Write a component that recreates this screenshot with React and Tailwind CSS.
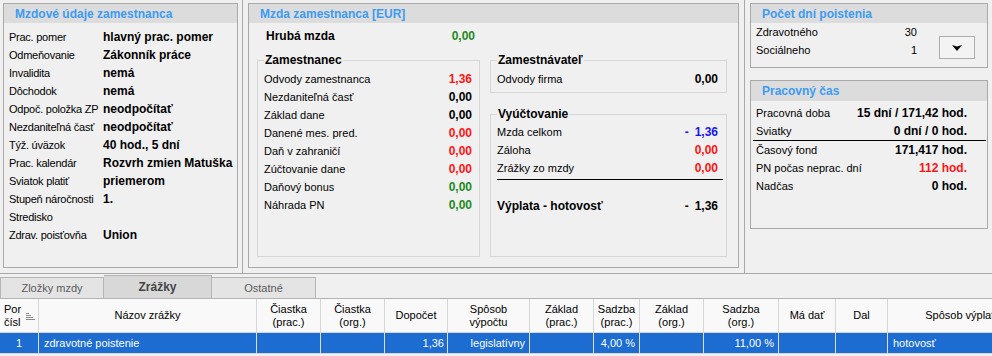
import { useState } from "react";

const RED = "text-[#ff1414]";
const GREEN = "text-[#1e8a1e]";
const BLACK = "text-black";

const employeeInfo = [
  ["Prac. pomer", "hlavný prac. pomer"],
  ["Odmeňovanie", "Zákonník práce"],
  ["Invalidita", "nemá"],
  ["Dôchodok", "nemá"],
  ["Odpoč. položka ZP", "neodpočítať"],
  ["Nezdaniteľná časť", "neodpočítať"],
  ["Týž. úväzok", "40 hod., 5 dní"],
  ["Prac. kalendár", "Rozvrh zmien Matuška"],
  ["Sviatok platiť", "priemerom"],
  ["Stupeň náročnosti", "1."],
  ["Stredisko", ""],
  ["Zdrav. poisťovňa", "Union"],
];

const employeeRows = [
  ["Odvody zamestnanca", "1,36", RED],
  ["Nezdaniteľná časť", "0,00", BLACK],
  ["Základ dane", "0,00", BLACK],
  ["Danené mes. pred.", "0,00", RED],
  ["Daň v zahraničí", "0,00", RED],
  ["Zúčtovanie dane", "0,00", RED],
  ["Daňový bonus", "0,00", GREEN],
  ["Náhrada PN", "0,00", GREEN],
];

const columns = [
  { w: "w-[39px]", label: ["Por", "čísl"], sort: true },
  { w: "w-[218px]", label: ["Názov zrážky"] },
  { w: "w-[64px]", label: ["Čiastka", "(prac.)"] },
  { w: "w-[64px]", label: ["Čiastka", "(org.)"] },
  { w: "w-[63px]", label: ["Dopočet"] },
  { w: "w-[82px]", label: ["Spôsob", "výpočtu"] },
  { w: "w-[64px]", label: ["Základ", "(prac.)"] },
  { w: "w-[46px]", label: ["Sadzba", "(prac.)"] },
  { w: "w-[64px]", label: ["Základ", "(org.)"] },
  { w: "w-[75px]", label: ["Sadzba", "(org.)"] },
  { w: "w-[57px]", label: ["Má dať"] },
  { w: "w-[52px]", label: ["Dal"] },
  { w: "w-[150px]", label: ["Spôsob výplaty"] },
];

const row = [
  { v: "1", a: "justify-center" },
  { v: "zdravotné poistenie", a: "justify-start pl-[5px]" },
  { v: "", a: "" },
  { v: "", a: "" },
  { v: "1,36", a: "justify-end pr-[3px]" },
  { v: "legislatívny", a: "justify-end pr-[4px]" },
  { v: "", a: "" },
  { v: "4,00 %", a: "justify-end pr-[4px]" },
  { v: "", a: "" },
  { v: "11,00 %", a: "justify-end pr-[4px]" },
  { v: "", a: "" },
  { v: "", a: "" },
  { v: "hotovosť", a: "justify-start pl-[5px]" },
];

function PanelHeader({ title, h = "h-[19px]" }) {
  return (
    <div className={`${h} bg-[#dcdcdc] flex items-center pl-[11px] text-[12px] font-bold text-[#3d9bf2]`}>
      {title}
    </div>
  );
}

function Group({ title, className, children }) {
  return (
    <fieldset className={`border border-[#d6d6d6] pl-[6px] pr-[7px] ${className}`}>
      <legend className="px-[1px] text-[12px] font-bold leading-[18px]">{title}</legend>
      {children}
    </fieldset>
  );
}

function ValueRow({ label, value, color = BLACK }) {
  return (
    <div className="h-[18px] flex items-center justify-between">
      <span className="text-[11px]">{label}</span>
      <span className={`text-[12px] font-bold ${color}`}>{value}</span>
    </div>
  );
}

function SortIcon() {
  return (
    <svg width="9" height="8" viewBox="0 0 9 8" className="ml-[5px] mt-[2px]">
      <g stroke="#8a8a8a" strokeWidth="1">
        <line x1="0" y1="0.5" x2="3" y2="0.5" />
        <line x1="0" y1="2.5" x2="5" y2="2.5" />
        <line x1="0" y1="4.5" x2="7" y2="4.5" />
        <line x1="0" y1="6.5" x2="9" y2="6.5" />
      </g>
    </svg>
  );
}

export default function App() {
  const [tab, setTab] = useState("Zrážky");
  const tabs = [
    ["Zložky mzdy", "w-[104px] border-l"],
    ["Zrážky", "w-[108px]"],
    ["Ostatné", "w-[104px]"],
  ];

  return (
    <div className="w-[992px] h-[356px] overflow-hidden bg-[#f0f0f0] text-black font-['Liberation_Sans',Arial,sans-serif]">
      <div className="flex h-[274px] border-b border-[#a9a9a9]">
        {/* left column */}
        <div className="w-[243px] border-r border-[#a9a9a9] pt-[3px] pl-[3px]">
          <div className="w-[235px] h-[265px] border border-[#a9a9a9]">
            <PanelHeader title="Mzdové údaje zamestnanca" />
            <div className="mt-[5px] pl-[5px]">
              {employeeInfo.map(([label, value]) => (
                <div key={label} className="h-[18px] flex items-center">
                  <span className="w-[94px] shrink-0 text-[11px] tracking-[-0.25px] whitespace-nowrap">{label}</span>
                  <span className="text-[12px] font-bold whitespace-nowrap">{value}</span>
                </div>
              ))}
            </div>
          </div>
        </div>

        {/* middle column */}
        <div className="w-[502px] border-r border-[#a9a9a9] pt-[3px] pl-[5px]">
          <div className="w-[491px] h-[265px] border border-[#a9a9a9]">
            <PanelHeader title="Mzda zamestnanca [EUR]" />
            <div className="pl-[8px] flex gap-[10px]">
              <div className="w-[223px]">
                <div className="mt-[4px] h-[18px] flex items-center justify-between pl-[9px] pr-[5px]">
                  <span className="text-[12px] font-bold">Hrubá mzda</span>
                  <span className={`text-[12px] font-bold ${GREEN}`}>0,00</span>
                </div>
                <Group title="Zamestnanec" className="mt-[6px] h-[206px] pr-[4px]">
                  <div className="pt-[1px]">
                    {employeeRows.map(([l, v, c]) => (
                      <ValueRow key={l} label={l} value={v} color={c} />
                    ))}
                  </div>
                </Group>
              </div>
              <div className="w-[237px] pt-[28px]">
                <Group title="Zamestnávateľ" className="h-[42px]">
                  <div className="pt-[1px] pr-[1px]">
                    <ValueRow label="Odvody firma" value="0,00" />
                  </div>
                </Group>
                <Group title="Vyúčtovanie" className="mt-[12px] h-[152px]">
                  <div className="pr-[1px]">
                    <div className="h-[18px] flex items-center justify-between">
                      <span className="text-[11px]">Mzda celkom</span>
                      <span className="flex gap-[6px] text-[12px] font-bold text-[#1616f5]">
                        <span>-</span>
                        <span>1,36</span>
                      </span>
                    </div>
                    <ValueRow label="Záloha" value="0,00" color={RED} />
                    <ValueRow label="Zrážky zo mzdy" value="0,00" color={RED} />
                  </div>
                  <div className="mt-[2px] -mr-[4px] h-px bg-black" />
                  <div className="mt-[17px] h-[18px] flex items-center justify-between pr-[1px]">
                    <span className="text-[12px] font-bold">Výplata - hotovosť</span>
                    <span className="flex gap-[6px] text-[12px] font-bold">
                      <span>-</span>
                      <span>1,36</span>
                    </span>
                  </div>
                </Group>
              </div>
            </div>
          </div>
        </div>

        {/* right column */}
        <div className="flex-1 pt-[3px] pl-[5px]">
          <div className="w-[238px] h-[65px] border border-[#a9a9a9]">
            <PanelHeader title="Počet dní poistenia" />
            <div className="flex pl-[5px]">
              <div className="w-[161px]">
                <div className="h-[18px] flex items-center justify-between text-[11px]">
                  <span>Zdravotného</span>
                  <span>30</span>
                </div>
                <div className="h-[18px] flex items-center justify-between text-[11px]">
                  <span>Sociálneho</span>
                  <span>1</span>
                </div>
              </div>
              <button className="ml-[22px] mt-[13px] w-[36px] h-[23px] border border-[#adadad] bg-[#f3f3f3] flex items-center justify-center">
                <svg width="10" height="6" viewBox="0 0 10 6">
                  <polygon points="0,0 5,1.6 10,0 5,6" fill="#000" />
                </svg>
              </button>
            </div>
          </div>

          <div className="mt-[12px] w-[238px] h-[149px] border border-[#a9a9a9]">
            <PanelHeader title="Pracovný čas" h="h-[20px]" />
            <div className="mt-[3px]">
              <div className="pl-[5px] pr-[20px]">
                <ValueRow label="Pracovná doba" value="15 dní / 171,42 hod." />
                <ValueRow label="Sviatky" value="0 dní / 0 hod." />
              </div>
              <div className="ml-[2px] mr-[1px] h-px bg-black" />
              <div className="pl-[5px] pr-[20px]">
                <ValueRow label="Časový fond" value="171,417 hod." />
                <ValueRow label="PN počas neprac. dní" value="112 hod." color={RED} />
                <ValueRow label="Nadčas" value="0 hod." />
              </div>
            </div>
          </div>
        </div>
      </div>

      {/* tabs */}
      <div className="h-[24px] flex items-end">
        {tabs.map(([name, cls]) => {
          const active = tab === name;
          return (
            <button
              key={name}
              onClick={() => setTab(name)}
              className={`${cls} border-t border-r border-[#b4b4b4] flex items-center justify-center ${
                active
                  ? "h-[23px] bg-[#d8d8d8] text-[12px] font-bold text-[#444]"
                  : "h-[21px] bg-[#e4e4e4] text-[11px] text-[#5a5a5a]"
              }`}
            >
              {name}
            </button>
          );
        })}
      </div>

      {/* table */}
      <div className="border-t border-[#b4b4b4] w-[992px] overflow-hidden">
        <div className="flex h-[34px] bg-[#f9f9f9] border-b border-[#d6d6d6]">
          {columns.map((c, i) => (
            <div
              key={i}
              className={`${c.w} shrink-0 border-r border-[#d6d6d6] flex items-center text-[11px] leading-[13px] ${
                c.sort ? "justify-start pl-[4px]" : "justify-center text-center"
              }`}
            >
              <div className="whitespace-nowrap">
                {c.label.map((l) => (
                  <div key={l}>{l}</div>
                ))}
              </div>
              {c.sort && <SortIcon />}
            </div>
          ))}
        </div>
        <div className="flex h-[21px] bg-[#1c6cd2] text-white border-b border-[#d6d6d6]">
          {columns.map((c, i) => (
            <div
              key={i}
              className={`${c.w} shrink-0 border-r border-[#dcdcdc] flex items-center text-[11px] whitespace-nowrap ${row[i].a}`}
            >
              {row[i].v}
            </div>
          ))}
        </div>
      </div>
    </div>
  );
}
